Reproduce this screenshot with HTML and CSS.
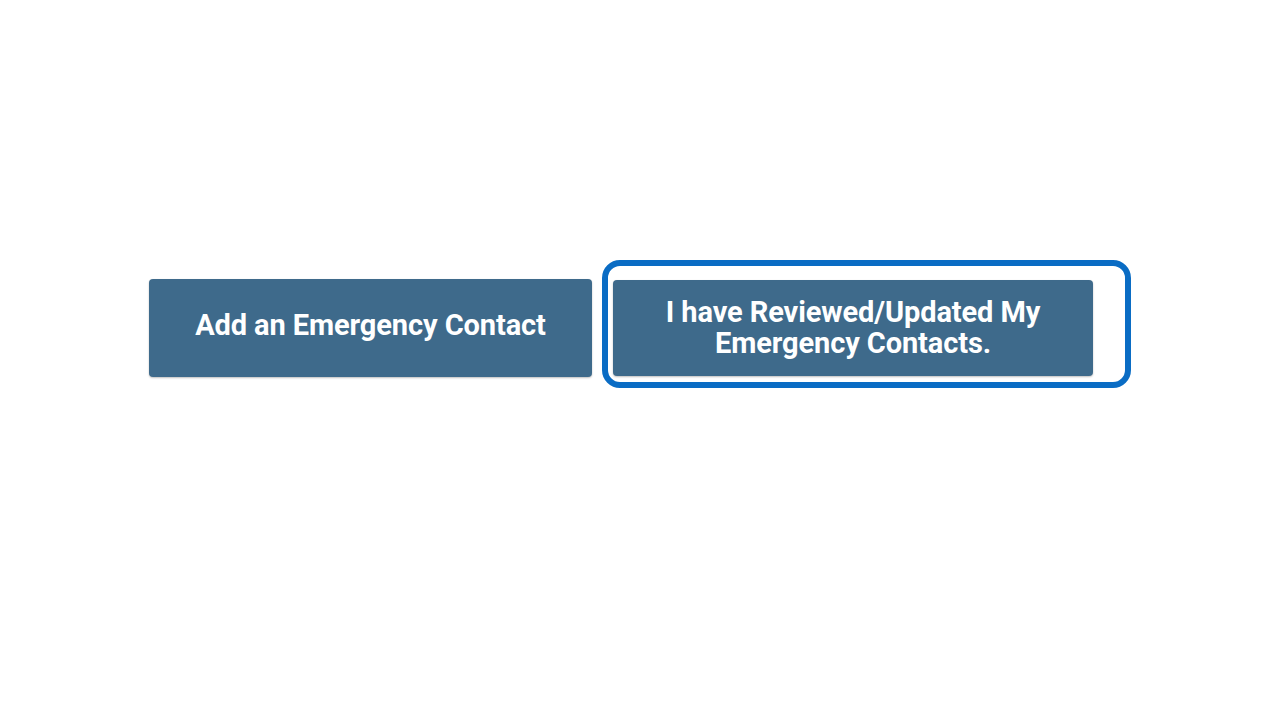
FILE: index.html
```html
<!DOCTYPE html>
<html>
<head>
<meta charset="utf-8">
<link rel="stylesheet" href="styles.css">
</head>
<body>
<div class="row">
  <button class="btn btn-add">Add an Emergency Contact</button>
  <div class="focus-ring">
    <button class="btn btn-reviewed">I have Reviewed/Updated My<br>Emergency Contacts.</button>
  </div>
</div>
</body>
</html>
```
FILE: styles.css
```css
html, body {
  margin: 0;
  padding: 0;
  background: #ffffff;
}
.row {
  display: flex;
  justify-content: center;
  align-items: flex-start;
  padding-top: 260px;
  gap: 10px;
}
.btn {
  border: none;
  background: #3e6a8b;
  color: #ffffff;
  font-family: Roboto, "Liberation Sans", sans-serif;
  font-weight: 700;
  font-size: 29px;
  letter-spacing: -0.1px;
  border-radius: 4px;
  box-shadow: 0 1px 2px rgba(0,0,0,0.25);
  cursor: pointer;
  padding: 0;
}
.btn-add {
  margin-top: 19px;
  width: 443px;
  height: 98px;
  padding-bottom: 6px;
}
.focus-ring {
  border: 6px solid #0a6cc4;
  border-radius: 18px;
  padding: 14px 32px 6px 5px;
  box-sizing: border-box;
  width: 529px;
  height: 128px;
}
.btn-reviewed {
  width: 480px;
  height: 96px;
  line-height: 31px;
  padding-bottom: 0;
}
```
